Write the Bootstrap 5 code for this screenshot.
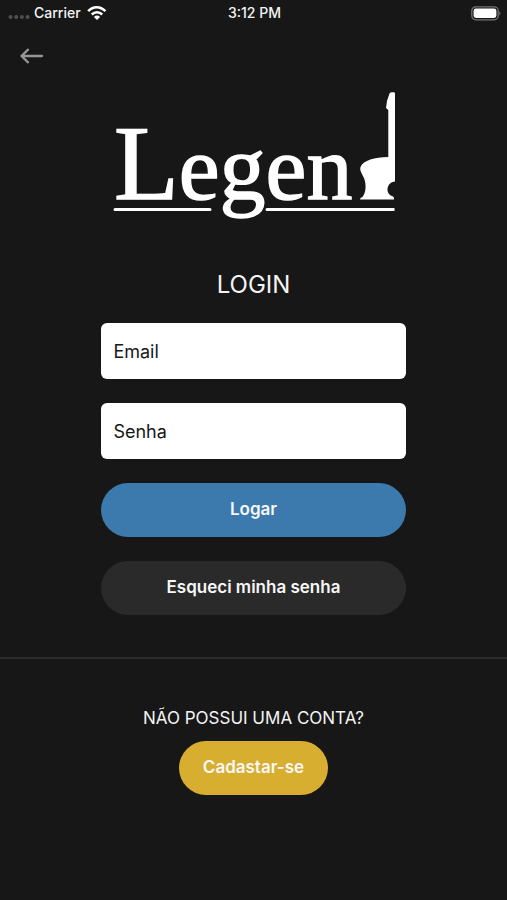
<!DOCTYPE html>
<html lang="pt-BR">
<head>
<meta charset="utf-8">
<meta name="viewport" content="width=device-width, initial-scale=1">
<title>Legend - Login</title>
<link href="https://cdn.jsdelivr.net/npm/bootstrap@5.3.0/dist/css/bootstrap.min.css" rel="stylesheet">
<style>
  body { background: #171717; color: #f4f4f4; font-family: Inter, "Liberation Sans", sans-serif; }
  .status-bar { height: 26px; font-size: 14px; line-height: 26px; font-weight: 500; padding: 0 6px 0 8px; }
  .status-bar svg { display: block; }
  .back-btn { line-height: 0; margin: 16px 0 0 18px; }
  .brand-logo { width: 284px; height: 142px; margin-top: 22px; }
  .login-title { font-size: 24px; line-height: 32px; margin: 35px 0 22px; }
  .login-form { padding: 0 20%; gap: 24px; }
  .login-form .form-control { height: 56px; border: 0; border-radius: 6px; padding: 0 12px; font-size: 18px; color: #171717; background: #fff; }
  .login-form .form-control::placeholder { color: #171717; opacity: 1; }
  .pill { height: 54px; font-size: 17px; font-weight: 600; border: 0; --bs-btn-color: #f7f7f7; --bs-btn-hover-color: #fff; }
  .pill-blue { --bs-btn-bg: #3c7aae; --bs-btn-hover-bg: #346c9b; }
  .pill-dark { --bs-btn-bg: #2a2a2a; --bs-btn-hover-bg: #353535; }
  .pill-gold { --bs-btn-bg: #d8ae30; --bs-btn-hover-bg: #c39c28; padding: 0 24px; }
  .divider { height: 2px; background: #2c2c2c; margin-top: 42px; }
  .signup { margin-top: 47px; }
  .signup p { font-size: 17px; line-height: 24px; margin-bottom: 11px; }
</style>
</head>
<body class="min-vh-100">
<header>
  <div class="status-bar row g-0 align-items-center">
    <div class="col d-flex align-items-center">
      <svg width="22" height="6" viewBox="0 0 22 6" fill="#515151" class="mt-2" aria-hidden="true"><circle cx="2.5" cy="3" r="2"/><circle cx="8.2" cy="3" r="2"/><circle cx="13.9" cy="3" r="2"/><circle cx="19.6" cy="3" r="2"/></svg>
      <span class="mx-1">Carrier</span>
      <svg width="22" height="16" viewBox="-2 0 22 16" fill="none" stroke="#fff" stroke-width="2.6" aria-label="Wi-Fi" role="img"><path d="M1.2 6.2C6 .9 13.2.9 18.4 6.2"/><path d="M4.8 9.5C7.8 6.4 12.2 6.4 15.2 9.5"/><path d="M10 15 6.9 11.9Q10 9.3 13.1 11.9Z" fill="#fff" stroke="none"/></svg>
    </div>
    <div class="col-auto text-center">3:12 PM</div>
    <div class="col d-flex justify-content-end">
      <svg width="30" height="15" viewBox="0 0 30 15" aria-label="Bateria" role="img"><rect x=".8" y=".8" width="26.4" height="13" rx="4" fill="none" stroke="#747474" stroke-width="1.3"/><rect x="2.6" y="2.6" width="22.8" height="9.4" rx="2.4" fill="#fff"/><path d="M28.3 5Q30.5 7.3 28.3 9.6Z" fill="#747474"/></svg>
    </div>
  </div>
  <button type="button" class="back-btn btn border-0 p-0 d-block" aria-label="Voltar">
    <svg width="26" height="28" viewBox="0 0 26 28" fill="none" stroke="#969696" stroke-width="2.3" stroke-linecap="round" stroke-linejoin="round"><path d="M24 14H3.5M10 7.7 3.5 14 10 20.3"/></svg>
  </button>
</header>

<main class="d-flex flex-column">
  <svg class="brand-logo align-self-center" viewBox="-1 0 284 142" fill="#fff" role="img" aria-label="Legend">
    <text x="1" y="107" font-family="'Liberation Serif', serif" stroke="#fff" stroke-width="1.4"><tspan font-size="106">L</tspan><tspan font-size="92">egen</tspan></text>
    <path d="M2 116H97A1.500 1.500 0 0 1 97 119H2A1.500 1.500 0 0 1 2 116ZM154 116H281.500V119H154A1.500 1.500 0 0 1 154 116Z"/>
    <path d="M276.500 1.500Q277.500 0 279.500 .3H281Q282 .5 282 2V89.500C273.500 90 272 101.500 279 104Q281.500 105 281 107.500H247Q246.800 105.500 249.500 105C253 100 253.500 93 251 86C248.500 81 246.500 78 247.500 75C250.500 68 261.500 65.500 275.300 65V18L273 16Q273.500 8.500 276.500 1.500Z"/>
  </svg>
  <h1 class="login-title text-center fw-normal">LOGIN</h1>
  <form class="login-form d-flex flex-column">
    <div>
      <label for="email" class="visually-hidden">Email</label>
      <input type="email" id="email" class="form-control" placeholder="Email">
    </div>
    <div>
      <label for="senha" class="visually-hidden">Senha</label>
      <input type="password" id="senha" class="form-control" placeholder="Senha">
    </div>
    <button type="submit" class="btn pill pill-blue rounded-pill w-100">Logar</button>
    <button type="button" class="btn pill pill-dark rounded-pill w-100">Esqueci minha senha</button>
  </form>
  <div class="divider"></div>
  <section class="signup text-center">
    <p>NÃO POSSUI UMA CONTA?</p>
    <button type="button" class="btn pill pill-gold rounded-pill">Cadastar-se</button>
  </section>
</main>
<script src="https://cdn.jsdelivr.net/npm/bootstrap@5.3.0/dist/js/bootstrap.bundle.min.js"></script>
</body>
</html>
